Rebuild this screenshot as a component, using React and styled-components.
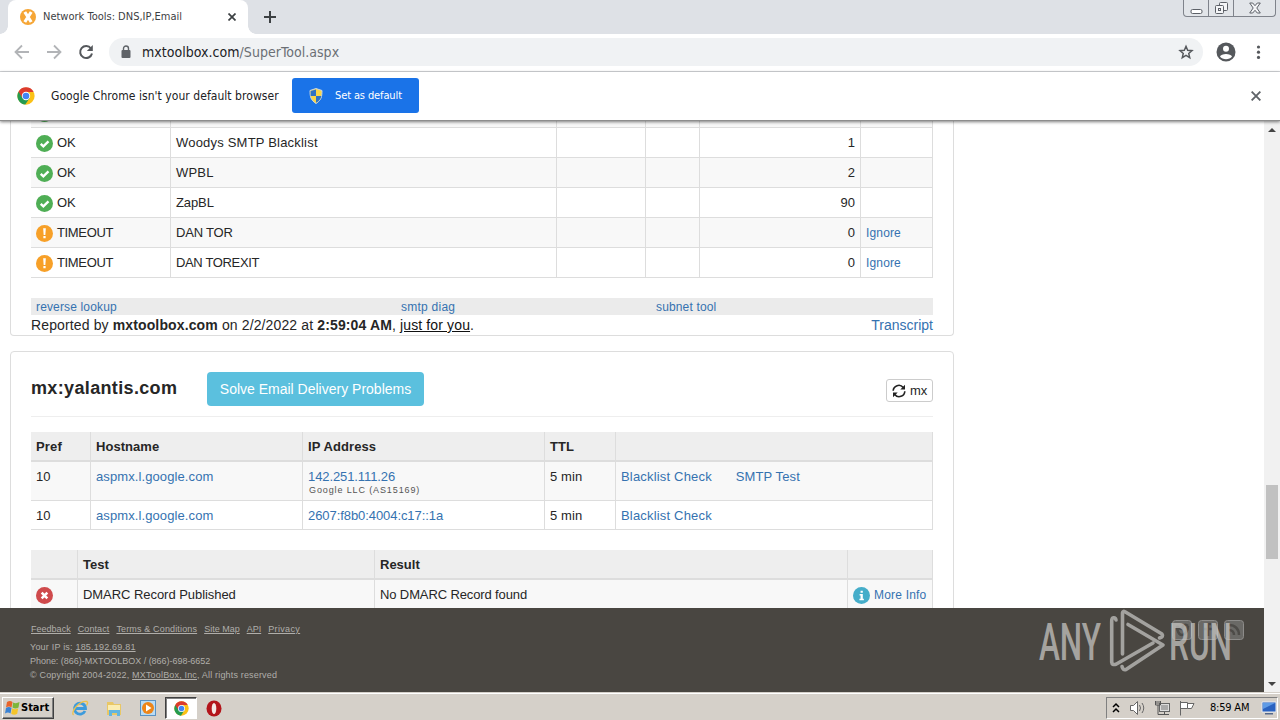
import React from "react";
import styled, { createGlobalStyle, css } from "styled-components";

const Global = createGlobalStyle`
  * { box-sizing: border-box; }
  body { margin: 0; overflow: hidden; background: #fff; }
`;

const ui = `"DejaVu Sans Condensed", "DejaVu Sans", sans-serif`;
const arial = `"Liberation Sans", Arial, sans-serif`;

const Screen = styled.div`
  width: 1280px;
  height: 720px;
  display: flex;
  flex-direction: column;
  overflow: hidden;
  font-family: ${arial};
  color: #262626;
`;

const Txt = styled.span`
  white-space: pre;
  letter-spacing: ${(p) => p.$ls || 0}px;
`;

/* Browser chrome */
const TabStrip = styled.div`
  height: 34px;
  background: #dee1e6;
  display: flex;
  padding-left: 8px;
`;
const Tab = styled.div`
  position: relative;
  width: 240px;
  height: 34px;
  background: #fff;
  border-radius: 8px 8px 0 0;
  display: flex;
  align-items: center;
  padding: 0 12px 0 12px;
  font: 11px/16px ${ui};
  color: #3c4043;
  &::before, &::after {
    content: "";
    position: absolute;
    bottom: 0;
    width: 8px;
    height: 8px;
  }
  &::before {
    left: -8px;
    background: radial-gradient(circle at 0 0, transparent 7.5px, #fff 8px);
  }
  &::after {
    right: -8px;
    background: radial-gradient(circle at 100% 0, transparent 7.5px, #fff 8px);
  }
`;
const TabTitle = styled(Txt)`
  margin-left: 7px;
  flex: 1;
`;
const NewTab = styled.div`
  width: 44px;
  display: flex;
  align-items: center;
  justify-content: center;
`;
const WindowButtons = styled.div`
  margin-left: auto;
  margin-right: 4px;
  height: 17px;
  display: flex;
  border: 1px solid #7f838b;
  border-top: 0;
  border-radius: 0 0 4px 4px;
  background: #e2e5e9;
`;
const WinButton = styled.div`
  width: ${(p) => p.$w}px;
  display: flex;
  justify-content: center;
  align-items: center;
  & + & { border-left: 1px solid #7f838b; }
`;
const Toolbar = styled.div`
  height: 38px;
  flex: none;
  border-bottom: 1px solid #d5d7da;
  display: flex;
  align-items: center;
  padding: 0 12px 2px 13px;
`;
const NavIcon = styled.div`
  width: 18px;
  height: 18px;
  margin-right: 14px;
  svg { display: block; }
`;
const Omnibox = styled.div`
  flex: 1;
  height: 28px;
  border-radius: 14px;
  background: #f0f2f4;
  display: flex;
  align-items: center;
  padding: 0 9px 0 11px;
  font: 14px/20px ${ui};
  color: #202124;
`;
const Url = styled(Txt)`
  flex: 1;
  margin-left: 10px;
  i { font-style: normal; color: #6b6f74; }
`;
const ToolbarEnd = styled.div`
  display: flex;
  align-items: center;
  gap: 16px;
  padding-left: 13px;
`;
const InfoBar = styled.div`
  height: 49px;
  flex: none;
  position: relative;
  z-index: 1;
  background: #fff;
  border-bottom: 1px solid #8d8d8d;
  box-shadow: 0 1px 3px rgba(0, 0, 0, 0.5);
  display: flex;
  align-items: center;
  padding: 0 19px 1px 17px;
  font: 12px/16px ${ui};
  color: #202124;
`;
const InfoText = styled(Txt)`
  margin-left: 16px;
  width: 241px;
`;
const DefaultButton = styled.div`
  width: 127px;
  height: 35px;
  border-radius: 3px;
  background: #1a73e8;
  color: #fff;
  display: flex;
  align-items: center;
  gap: 11px;
  padding-left: 16px;
  font-size: 11px;
`;
const Push = styled.div`
  margin-left: auto;
  display: flex;
`;

/* Page */
const Viewport = styled.div`
  height: 571px;
  flex: none;
  display: flex;
`;
const Page = styled.div`
  width: 1264px;
  height: 571px;
  display: flex;
  flex-direction: column;
`;
const Results = styled.div`
  height: 487px;
  overflow: hidden;
  padding-left: 10px;
  display: flex;
  flex-direction: column;
  gap: 15px;
`;
const Card = styled.section`
  width: 944px;
  flex: none;
  height: ${(p) => p.$h}px;
  border: 1px solid #ddd;
  border-radius: ${(p) => (p.$open ? "0 0 4px 4px" : "4px 4px 0 0")};
  ${(p) => p.$open && css`
    border-top: 0;
    margin-top: -23px;
  `}
  padding: 0 20px;
  font-size: 14px;
`;
const Row = styled.div`
  display: grid;
  grid-template-columns: ${(p) => p.$cols};
  height: ${(p) => p.$h || 30}px;
  background: ${(p) => (p.$head ? "#eee" : p.$alt ? "#f8f8f8" : "#fff")};
  border-bottom: ${(p) => (p.$head ? 2 : 1)}px solid #ddd;
  font-weight: ${(p) => (p.$head ? 700 : 400)};
`;
const Cell = styled.div`
  border-right: 1px solid #ddd;
  padding: 5px 5px 0;
  font-size: 13px;
  line-height: 20px;
  letter-spacing: ${(p) => p.$ls || 0}px;
  text-align: ${(p) => (p.$right ? "right" : "left")};
  white-space: nowrap;
  overflow: hidden;
`;
const Status = styled.div`
  display: flex;
  gap: 4px;
  svg { flex: none; margin-top: 2px; }
`;
const Link = styled.a`
  color: #3572b0;
  white-space: pre;
  letter-spacing: ${(p) => p.$ls || 0}px;
  font-size: ${(p) => p.$size || 13}px;
  text-decoration: none;
`;
const Links = styled.div`
  display: flex;
  gap: 24px;
`;
const LinkBar = styled.div`
  margin-top: 20px;
  height: 17px;
  background: #ebebeb;
  display: grid;
  grid-template-columns: 365px 255px 1fr;
  padding-left: 5px;
  line-height: 18px;
`;
const Reported = styled.div`
  display: flex;
  justify-content: space-between;
  line-height: 20px;
  u { color: #111; }
`;
const CardHead = styled.div`
  height: 65px;
  border-bottom: 1px solid #eee;
  margin-bottom: 15px;
  padding-top: 20px;
  display: flex;
`;
const Title = styled.h2`
  margin: 0;
  width: 176px;
  font-size: 18px;
  line-height: 33px;
  letter-spacing: 0.35px;
`;
const SolveButton = styled.div`
  width: 217px;
  height: 34px;
  border-radius: 4px;
  background: #5bc0de;
  color: #fff;
  text-align: center;
  line-height: 35px;
`;
const MxButton = styled.div`
  margin: 7px 0 0 auto;
  width: 47px;
  height: 23px;
  border: 1px solid #ccc;
  border-radius: 3px;
  display: flex;
  align-items: center;
  gap: 4px;
  padding-left: 5px;
  font-size: 13px;
`;
const Org = styled.div`
  font-size: 9px;
  line-height: 10px;
  margin-top: -2px;
  padding-left: 1px;
  letter-spacing: 0.88px;
  color: #555;
`;
const Spacer = styled.div`
  height: 20px;
`;
const Footer = styled.footer`
  height: 84px;
  background: #494641;
  position: relative;
  padding: 14px 0 0 30px;
  color: #b0aeaa;
  font-size: 9px;
  line-height: 14px;
`;
const FooterLinks = styled.div`
  display: flex;
  gap: 7px;
  margin-bottom: 4px;
  padding-left: 1px;
  text-decoration: underline;
`;
const FooterLine = styled.div`
  height: 14px;
`;
const Watermark = styled.svg`
  position: absolute;
  left: 1030px;
  top: 0;
`;
const ScrollBar = styled.div`
  width: 16px;
  background: #f1f1f1;
  display: flex;
  flex-direction: column;
  align-items: center;
`;
const Arrow = styled.div`
  width: 16px;
  height: 17px;
  display: flex;
  align-items: center;
  justify-content: center;
  &::after {
    content: "";
    border: 4px solid transparent;
    border-top-width: ${(p) => (p.$up ? 0 : 4)}px;
    border-bottom-width: ${(p) => (p.$up ? 4 : 0)}px;
    border-${(p) => (p.$up ? "bottom" : "top")}-color: #444;
  }
`;
const Thumb = styled.div`
  width: 12px;
  height: 74px;
  margin: 347px 0 auto;
  background: #c1c1c1;
`;

/* Taskbar */
const Taskbar = styled.div`
  height: 28px;
  flex: none;
  background: #d5d0c9;
  border-top: 1px solid #d5d0c9;
  box-shadow: inset 0 1px #fff;
  display: flex;
  align-items: center;
  padding: 3px 2px 0;
`;
const Start = styled.div`
  width: 52px;
  height: 22px;
  border: 1px solid;
  border-color: #fff #404040 #404040 #fff;
  box-shadow: inset -1px -1px #808080;
  display: flex;
  align-items: center;
  padding-left: 2px;
  gap: 1px;
  font: bold 11px/16px ${ui};
  color: #000;
  margin-right: 9px;
`;
const TaskItem = styled.div`
  width: ${(p) => (p.$active ? 32 : 34)}px;
  height: 22px;
  display: flex;
  align-items: center;
  justify-content: center;
  ${(p) => p.$active && css`
    background: #fff;
    border: 1px solid;
    border-color: #404040 #fff #fff #404040;
    box-shadow: inset 1px 1px #808080;
  `}
`;
const Tray = styled.div`
  margin-left: auto;
  width: 172px;
  height: 22px;
  border: 1px solid;
  border-color: #808080 #fff #fff #808080;
  display: flex;
  align-items: center;
  padding-left: 5px;
  font: 11px/16px ${ui};
  color: #000;
  svg { flex: none; }
`;
const TrayIcons = styled.div`
  display: flex;
  gap: 8px;
  margin-left: 9px;
`;
const Clock = styled(Txt)`
  width: 51px;
  margin-left: 15px;
`;

const OkIcon = () => (
  <svg width="17" height="17" viewBox="0 0 18 18">
    <circle cx="9" cy="9" r="9" fill="#4fae55" />
    <path d="M5 9.300l2.800 2.700 5.400-5.300" fill="none" stroke="#fff" strokeWidth="2.500" />
  </svg>
);
const WarnIcon = () => (
  <svg width="17" height="17" viewBox="0 0 18 18">
    <circle cx="9" cy="9" r="9" fill="#f7a028" />
    <path d="M7.600 3.500h2.800l-.5 7H8.100zM7.800 11.700h2.400v2.400H7.800z" fill="#fff" />
  </svg>
);
const BadIcon = () => (
  <svg width="17" height="17" viewBox="0 0 18 18">
    <circle cx="9" cy="9" r="9" fill="#cf4a4c" />
    <path d="M6 6l6 6M12 6l-6 6" stroke="#fff" strokeWidth="2.700" />
  </svg>
);
const InfoIcon = () => (
  <svg width="17" height="17" viewBox="0 0 18 18">
    <circle cx="9" cy="9" r="9" fill="#45adc9" />
    <path d="M8 4h2.400v2.200H8zM7 7.400h3.400v5h1.100V14H6.800v-1.600h1.200V9H7z" fill="#fff" />
  </svg>
);
const ChromeIcon = ({ s = 17 }) => (
  <svg width={s} height={s} viewBox="0 0 24 24">
    <circle cx="12" cy="12" r="11.500" fill="#fbc116" />
    <path d="M12 12L2.040 6.250A11.500 11.500 0 0 0 11 23.460L17 14.500z" fill="#249b50" />
    <path d="M12 6.500h10.100L22 6.300A11.500 11.500 0 0 0 2.040 6.250L7.200 14.800z" fill="#dc3b2e" />
    <circle cx="12" cy="12" r="5.600" fill="#fff" />
    <circle cx="12" cy="12" r="4.400" fill="#4285f4" />
  </svg>
);
const Cross = ({ s = 8, w = 1.7, c = "#3c4043" }) => (
  <svg width={s} height={s} viewBox="0 0 8 8">
    <path d="M.5.5l7 7M7.500.5l-7 7" stroke={c} strokeWidth={w} />
  </svg>
);

const blColumns = "140px 386px 89px 54px 161px 72px";
const blRows = [
  [OkIcon, "OK", "Woodys SMTP Blacklist", "1", 0.2],
  [OkIcon, "OK", "WPBL", "2", 0.2],
  [OkIcon, "OK", "ZapBL", "90", -0.1],
  [WarnIcon, "TIMEOUT", "DAN TOR", "0", -0.2],
  [WarnIcon, "TIMEOUT", "DAN TOREXIT", "0", -0.35],
];
const mxColumns = "60px 212px 242px 71px 317px";
const testColumns = "47px 297px 473px 85px";

export default function App() {
  return (
    <Screen>
      <Global />
      <TabStrip>
        <Tab>
          <svg width="16" height="16" viewBox="0 0 16 16">
            <circle cx="8" cy="8" r="8" fill="#f6a636" />
            <path d="M4.800 3l6.400 10M11.200 3L4.800 13" stroke="#fff" strokeWidth="3.200" />
          </svg>
          <TabTitle>Network Tools: DNS,IP,Email</TabTitle>
          <Cross />
        </Tab>
        <NewTab>
          <svg width="12" height="12" viewBox="0 0 12 12">
            <path d="M6 0v12M0 6h12" stroke="#3c4043" strokeWidth="2" />
          </svg>
        </NewTab>
        <WindowButtons>
          <WinButton $w={24}>
            <svg width="13" height="15" viewBox="0 0 13 15">
              <rect x="1" y="8.500" width="11" height="4" rx="1.500" fill="#fff" stroke="#5d6168" />
            </svg>
          </WinButton>
          <WinButton $w={25}>
            <svg width="13" height="15" viewBox="0 0 13 15" fill="#f4f5f7" stroke="#5d6168">
              <rect x="4.500" y="1.500" width="8" height="8" rx="1" />
              <rect x=".5" y="4.500" width="8" height="8" rx="1" />
              <rect x="3.500" y="7.500" width="2" height="2" />
            </svg>
          </WinButton>
          <WinButton $w={42}>
            <svg width="12" height="12" viewBox="0 0 12 12">
              <path d="M.7 1h3L6 3.700 8.300 1h3L7.800 6l3.500 5h-3L6 8.300 3.700 11h-3l3.500-5z" fill="#f4f5f7" stroke="#5d6168" />
            </svg>
          </WinButton>
        </WindowButtons>
      </TabStrip>
      <Toolbar>
        <NavIcon>
          <svg width="18" height="18" viewBox="0 0 18 18" fill="none" stroke="#b2b4b7" strokeWidth="1.800">
            <path d="M16 9H3M9 2.500L2.500 9 9 15.500" />
          </svg>
        </NavIcon>
        <NavIcon>
          <svg width="18" height="18" viewBox="0 0 18 18" fill="none" stroke="#b2b4b7" strokeWidth="1.800">
            <path d="M2 9h13M9 2.500L15.500 9 9 15.500" />
          </svg>
        </NavIcon>
        <NavIcon>
          <svg width="18" height="18" viewBox="0 0 18 18">
            <path d="M14 5.500A6 6 0 1 0 15 10.500" fill="none" stroke="#55585c" strokeWidth="2" />
            <path d="M15.800 2v6h-6z" fill="#55585c" />
          </svg>
        </NavIcon>
        <Omnibox>
          <svg width="12" height="14" viewBox="0 0 12 14">
            <rect x="1.500" y="5" width="9" height="8" rx="1" fill="#5f6368" />
            <path d="M3.500 5V3.500a2.500 2.500 0 0 1 5 0V5" fill="none" stroke="#5f6368" strokeWidth="1.400" />
          </svg>
          <Url $ls={0.03}>mxtoolbox.com<i>/SuperTool.aspx</i></Url>
          <svg width="16" height="16" viewBox="0 0 24 24">
            <path d="M12 3.500l2.500 5.900 6.500.6-4.900 4.200 1.500 6.300-5.600-3.400-5.600 3.400 1.500-6.300L3 10l6.500-.6z" fill="none" stroke="#55585c" strokeWidth="2.200" />
          </svg>
        </Omnibox>
        <ToolbarEnd>
          <svg width="20" height="20" viewBox="0 0 20 20">
            <circle cx="10" cy="10" r="9.500" fill="#55585c" />
            <circle cx="10" cy="6.800" r="3" fill="#fff" />
            <path d="M4 14.500c1-3.500 11-3.500 12 0-2.500 3.500-9.500 3.500-12 0z" fill="#fff" />
          </svg>
          <svg width="16" height="16" viewBox="0 0 16 16" fill="#55585c">
            <circle cx="6.500" cy="3" r="1.600" />
            <circle cx="6.500" cy="8.200" r="1.600" />
            <circle cx="6.500" cy="13.400" r="1.600" />
          </svg>
        </ToolbarEnd>
      </Toolbar>
      <InfoBar>
        <ChromeIcon s={18} />
        <InfoText $ls={0.05}>Google Chrome isn't your default browser</InfoText>
        <DefaultButton>
          <svg width="16" height="16" viewBox="0 0 16 16">
            <path d="M8 .5L14 2.500c0 6-.5 9.500-6 13C2.500 12 2 8.500 2 2.500z" fill="#f9d648" stroke="#c9d6e2" />
            <path d="M8 1.500v6.500H2.700L2.600 3zM8 8h5.300c-.5 3-2 5-5.300 6.800z" fill="#2f72c4" />
          </svg>
          <Txt $ls={-0.12}>Set as default</Txt>
        </DefaultButton>
        <Push><Cross s={10} w={1.5} c="#5f6368" /></Push>
      </InfoBar>

      <Viewport>
        <Page>
          <Results>
            <Card $open $h={238}>
              <Row $cols={blColumns} $h={30} $alt>
                <Cell><Status><OkIcon /></Status></Cell>
                <Cell /><Cell /><Cell /><Cell /><Cell />
              </Row>
              {blRows.map(([Icon, status, name, time, ls], i) => (
                <Row key={name} $cols={blColumns} $alt={i % 2 === 1}>
                  <Cell><Status><Icon /><Txt $ls={status === "OK" ? 0 : -0.35}>{status}</Txt></Status></Cell>
                  <Cell $ls={ls}>{name}</Cell>
                  <Cell />
                  <Cell />
                  <Cell $right>{time}</Cell>
                  <Cell>{status === "TIMEOUT" && <Link $size={12} $ls={0.15}>Ignore</Link>}</Cell>
                </Row>
              ))}
              <LinkBar>
                <Link $size={12} $ls={0.15}>reverse lookup</Link>
                <Link $size={12} $ls={0.25}>smtp diag</Link>
                <Link $size={12} $ls={0.15}>subnet tool</Link>
              </LinkBar>
              <Reported>
                <Txt $ls={0.13}>Reported by <b>mxtoolbox.com</b> on 2/2/2022 at <b>2:59:04 AM</b>, <u>just for you</u>.</Txt>
                <Link $size={14}>Transcript</Link>
              </Reported>
            </Card>
            <Card $h={300}>
              <CardHead>
                <Title>mx:yalantis.com</Title>
                <SolveButton><Txt>Solve Email Delivery Problems</Txt></SolveButton>
                <MxButton>
                  <svg width="14" height="14" viewBox="0 0 14 14">
                    <path d="M1.200 6.800a5.600 5.600 0 0 1 10-3.300M12.800 7.200a5.600 5.600 0 0 1-10 3.300" fill="none" stroke="#222" strokeWidth="1.600" />
                    <path d="M13 .8v4.700H8.300zM1 13.200V8.500h4.700z" fill="#222" />
                  </svg>
                  <Txt>mx</Txt>
                </MxButton>
              </CardHead>
              <Row $cols={mxColumns} $head>
                <Cell $ls={0.15}>Pref</Cell><Cell $ls={0.05}>Hostname</Cell><Cell $ls={0.1}>IP Address</Cell><Cell>TTL</Cell><Cell />
              </Row>
              <Row $cols={mxColumns} $h={39} $alt>
                <Cell>10</Cell>
                <Cell><Link $ls={0.1}>aspmx.l.google.com</Link></Cell>
                <Cell><Link $ls={-0.1}>142.251.111.26</Link><Org>Google LLC (AS15169)</Org></Cell>
                <Cell $ls={0.1}>5 min</Cell>
                <Cell><Links><Link $ls={0.18}>Blacklist Check</Link><Link $ls={0.1}>SMTP Test</Link></Links></Cell>
              </Row>
              <Row $cols={mxColumns} $h={29}>
                <Cell>10</Cell>
                <Cell><Link $ls={0.1}>aspmx.l.google.com</Link></Cell>
                <Cell><Link $ls={-0.07}>2607:f8b0:4004:c17::1a</Link></Cell>
                <Cell $ls={0.1}>5 min</Cell>
                <Cell><Link $ls={0.18}>Blacklist Check</Link></Cell>
              </Row>
              <Spacer />
              <Row $cols={testColumns} $head>
                <Cell /><Cell>Test</Cell><Cell>Result</Cell><Cell />
              </Row>
              <Row $cols={testColumns} $alt>
                <Cell><Status><BadIcon /></Status></Cell>
                <Cell $ls={-0.05}>DMARC Record Published</Cell>
                <Cell $ls={-0.12}>No DMARC Record found</Cell>
                <Cell><Status><InfoIcon /><Link $size={12} $ls={0.2}>More Info</Link></Status></Cell>
              </Row>
            </Card>
          </Results>
          <Footer>
            <FooterLinks>
              <Txt $ls={0.02}>Feedback</Txt><Txt $ls={0.1}>Contact</Txt><Txt $ls={0.15}>Terms &amp; Conditions</Txt>
              <Txt>Site Map</Txt><Txt>API</Txt><Txt $ls={0.35}>Privacy</Txt>
            </FooterLinks>
            <FooterLine><Txt $ls={0.2}>Your IP is: <u>185.192.69.81</u></Txt></FooterLine>
            <FooterLine><Txt $ls={-0.03}>Phone: (866)-MXTOOLBOX / (866)-698-6652</Txt></FooterLine>
            <FooterLine><Txt $ls={0.17}>© Copyright 2004-2022, <u>MXToolBox, Inc</u>, All rights reserved</Txt></FooterLine>
            <Watermark width="234" height="84" viewBox="0 0 234 84">
              <g fill="#6a6966" stroke="#8d8c8a">
                <rect x="142.500" y="12.500" width="19" height="19" rx="3" />
                <rect x="168.500" y="12.500" width="19" height="19" rx="3" />
                <rect x="194.500" y="12.500" width="19" height="19" rx="3" />
              </g>
              <g fill="none" stroke="#4d4b48" strokeWidth="2.500">
                <path d="M199 17c6 0 10 4 10 10M199 22c3 0 5 2 5 5" />
                <path d="M158 18c-3-3-6 0-6 3-2 0-4-1-5-3 0 5 2 9 5 9s6-4 6-9M181 16h-3v12M174 21h8" />
              </g>
              <g fill="#c9c8c5" fillOpacity=".72" fontFamily="Roboto" fontWeight="500" fontSize="51">
                <text x="9" y="52" textLength="62" lengthAdjust="spacingAndGlyphs">ANY</text>
                <text x="139" y="52" textLength="63" lengthAdjust="spacingAndGlyphs">RUN</text>
              </g>
              <g fill="none" stroke="#a3a29f" strokeWidth="3.600" strokeLinejoin="round" strokeLinecap="round">
                <path d="M86 12Q85.500 9.500 83.500 9.800T81.700 14V54Q82 57.500 86 56.200L123 35" />
                <path d="M98 16.500L133 37 96 61.500Q93 62.500 92 58.500" />
                <path d="M92.500 46V5Q92.800 2.600 95 3.800L132 26Q134 28.500 129.500 30" />
              </g>
            </Watermark>
          </Footer>
        </Page>
        <ScrollBar>
          <Arrow $up />
          <Thumb />
          <Arrow />
        </ScrollBar>
      </Viewport>

      <Taskbar>
        <Start>
          <svg width="15" height="16" viewBox="0 0 15 16">
            <path d="M2 2q3-2 5.500 0L6.500 7.500Q4 5.500 1 7.500z" fill="#e8632a" />
            <path d="M8 2.500Q11 4 14.500 2L13.500 7.500q-3 2-6 0z" fill="#7db63b" />
            <path d="M1 8q3-2 5.500 0l-1 5.500Q3 11.500 0 13.500z" fill="#3a82d4" />
            <path d="M7.200 8.300q3 2 6 0l-1 5.500q-3 2-6 0z" fill="#f5c52b" />
          </svg>
          <Txt>Start</Txt>
        </Start>
        <TaskItem>
          <svg width="18" height="18" viewBox="0 0 18 18" fill="none">
            <path d="M14 12A5.500 5.500 0 1 1 14.500 9.500H5" stroke="#3d9bdc" strokeWidth="2.800" />
            <path d="M2.500 16C-1 13 9 1 16 2.500q1.500 1-.5 4" stroke="#edc14a" strokeWidth="1.300" />
          </svg>
        </TaskItem>
        <TaskItem>
          <svg width="18" height="18" viewBox="0 0 18 18">
            <path d="M2 3h6l1 2h7v11H2z" fill="#e9c765" />
            <path d="M3 6h12v5H3z" fill="#fbedb2" />
            <path d="M4 17v-6h11v6h-3v-3H7v3z" fill="#62b5df" />
          </svg>
        </TaskItem>
        <TaskItem>
          <svg width="18" height="18" viewBox="0 0 18 18">
            <rect x="1.500" y="1.500" width="15" height="15" fill="#b9dcf5" stroke="#5a92c3" />
            <circle cx="9" cy="9" r="6" fill="#ee8518" />
            <path d="M7 5.500l5.500 3.500L7 12.500z" fill="#fff" />
          </svg>
        </TaskItem>
        <TaskItem $active><ChromeIcon s={15} /></TaskItem>
        <TaskItem>
          <svg width="16" height="17" viewBox="0 0 16 17">
            <ellipse cx="8" cy="8.500" rx="7.500" ry="8" fill="#b3151b" />
            <ellipse cx="8" cy="8.500" rx="2.300" ry="5.500" fill="#f4e9e6" />
          </svg>
        </TaskItem>
        <Tray>
          <svg width="8" height="12" viewBox="0 0 8 12" fill="none" stroke="#000" strokeWidth="1.500">
            <path d="M1 5l3-3 3 3M1 10l3-3 3 3" />
          </svg>
          <TrayIcons>
            <svg width="17" height="16" viewBox="0 0 17 16" fill="none" stroke="#666">
              <path d="M1.500 5.500h3l4-4v13l-4-4h-3z" fill="#fff" />
              <path d="M10.500 5q2 3 0 6M13 3q3.500 5 0 10" />
            </svg>
            <svg width="17" height="16" viewBox="0 0 17 16" stroke="#555">
              <rect x="5.500" y="3.500" width="10" height="8" fill="#ddd" stroke="#666" />
              <rect x="7" y="5" width="7" height="5" fill="#aaa" stroke="none" />
              <path d="M7 14.500h8M10.500 12v2" fill="none" />
              <path d="M1.500 1v4h5V1M3 1v3M5 1v3M4 5v9.500h3" fill="none" />
            </svg>
            <svg width="16" height="16" viewBox="0 0 16 16" fill="#fff" stroke="#666">
              <path d="M1.500 1v14.500M1.500 2.500h7v6h-7M8.500 3.500H15l-2.500 5h-4" />
            </svg>
          </TrayIcons>
          <Clock $ls={-0.2}>8:59 AM</Clock>
          <svg width="16" height="14" viewBox="0 0 16 14">
            <path d="M1 1h14v10H1z" fill="#2a62c0" stroke="#e6eaf0" />
            <path d="M2 2h12L2 8z" fill="#5f9be6" />
            <path d="M4 12h8v1.500H4z" fill="#54688a" />
          </svg>
        </Tray>
      </Taskbar>
    </Screen>
  );
}
